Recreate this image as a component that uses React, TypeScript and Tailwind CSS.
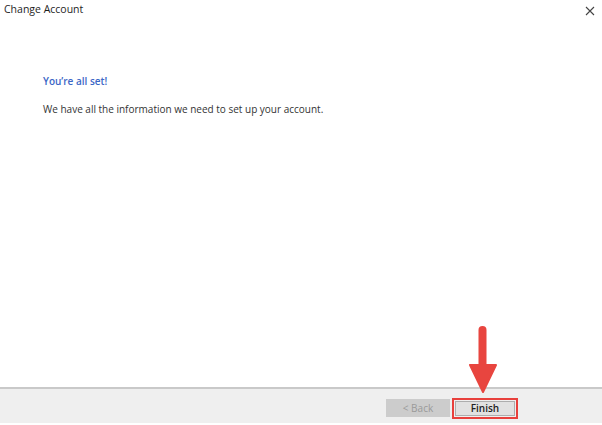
export default function App() {
  return (
    <div className="relative w-[602px] h-[425px] bg-white flex flex-col overflow-hidden font-['Segoe_UI','Open_Sans','Noto_Sans',sans-serif] text-[#1e1e1e]">
      {/* title bar */}
      <div className="h-[20px] flex items-start justify-between pl-[4px] pr-[7px] pt-[2px]">
        <span className="text-[10.5px] leading-[14px]">Change Account</span>
        <svg width="10" height="10" viewBox="0 0 10 10" className="mt-[4px]">
          <path d="M1 1 L9 9 M9 1 L1 9" stroke="#444" strokeWidth="1.1" />
        </svg>
      </div>

      {/* body */}
      <div className="flex-1 pl-[43px] pt-[54px]">
        <div className="text-[10px] leading-[14px] font-semibold text-[#3b67c6]">You’re all set!</div>
        <div className="mt-[14px] text-[10px] leading-[14px] text-[#333]">
          We have all the information we need to set up your account.
        </div>
      </div>

      {/* footer */}
      <div className="h-[38px] border-t-2 border-[#c9c9c9] border-b-2 border-b-white bg-[#efefef] flex items-start justify-end pr-[84px] pt-[10px] gap-[2px]">
        <div className="w-[64px] h-[18px] bg-[#cccccc] flex items-center justify-center text-[10px] text-[#9a9a9a]">
          &lt; Back
        </div>
        <div className="w-[66px] h-[21px] -mt-[1px] border-2 border-[#e8403c] p-[1px]">
          <div className="h-full bg-[#e1e1e1] border border-[#adadad] flex items-center justify-center text-[10px] font-semibold text-[#222]">
            Finish
          </div>
        </div>
      </div>

      {/* annotation arrow */}
      <svg className="absolute left-[468px] top-[326px]" width="30" height="68" viewBox="0 0 30 68">
        <path d="M14.5 4 L14.5 40" stroke="#e8453f" strokeWidth="8" strokeLinecap="round" />
        <path d="M2 39 L28 39 L15 66 Z" fill="#e8453f" stroke="#e8453f" strokeWidth="2" strokeLinejoin="round" />
      </svg>
    </div>
  );
}
